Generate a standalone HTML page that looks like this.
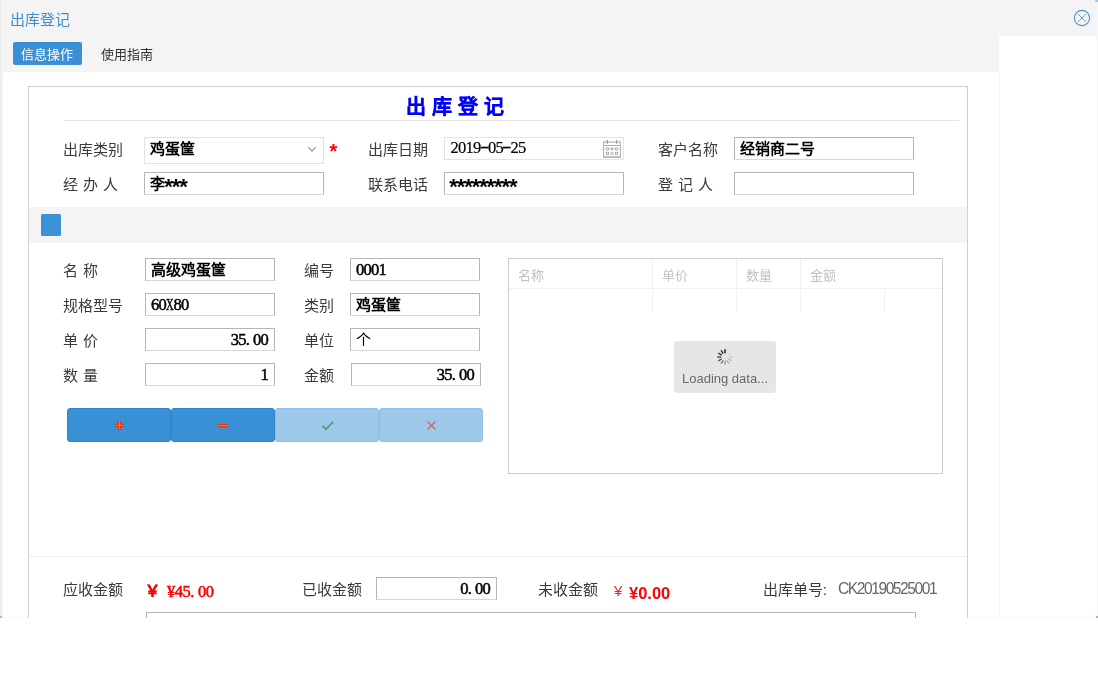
<!DOCTYPE html>
<html lang="zh-CN">
<head>
<meta charset="utf-8">
<title>出库登记</title>
<style>
*{box-sizing:border-box;margin:0;padding:0}
html,body{width:1098px;height:692px;background:#fff;overflow:hidden}
body{font-family:"Liberation Sans",sans-serif;font-size:15px;color:#3a3a3a;position:relative}
#win{position:absolute;left:0;top:0;width:1098px;height:618px;overflow:hidden;background:#fff;will-change:transform}
.abs{position:absolute}
.gray{background:#f4f4f4}
.lbl{position:absolute;margin-left:-1.2px;word-spacing:1px;font-size:15px;line-height:20px;height:20px;white-space:pre;color:#3a3a3a}
.inp{position:absolute;height:23px;border:1px solid #b6b6b6;border-bottom-color:#d6d6d6;background:#fff;font-size:15px;line-height:21px;padding:0 6px 0 5.3px;white-space:pre;color:#000;font-weight:bold;overflow:hidden}
.num{font-family:"Liberation Serif",serif;font-size:16.5px;letter-spacing:-0.75px;font-weight:normal;-webkit-text-stroke:0.5px currentColor}
.num i{font-style:normal;padding-right:4px}
.num u{text-decoration:none;display:inline-block;width:7.5px;text-align:center;transform:scaleX(1.7);letter-spacing:0;position:relative;top:-1px}
.num b{font-weight:normal;display:inline-block;width:7.5px;transform:scaleX(.64);transform-origin:0 50%;letter-spacing:0}
.ast{font-family:"Liberation Sans",sans-serif;font-size:22px;letter-spacing:-1.1px;font-weight:bold;position:relative;top:5px;left:-1px;line-height:0;-webkit-text-stroke:0}
.inp.num{padding-left:5px}
.r{text-align:right}
.btn{position:absolute;top:408px;width:104px;height:34px;border-radius:3px;border:1px solid #2f86cf;background:#3a90d5}
.btn.l{background:#9dc8ea;border-color:#8ec0e8}
.btn svg{position:absolute;left:0;top:0}
.gh{position:absolute;top:267.5px;margin-left:-.6px;font-size:13px;line-height:16px;color:#c2c2c2}
.vl{position:absolute;top:259px;width:1px;height:53px;background:#f1f1f1}
</style>
</head>
<body>
<div id="win">
  <!-- chrome backgrounds -->
  <div class="abs gray" style="left:0;top:0;width:1098px;height:36px"></div>
  <div class="abs gray" style="left:0;top:36px;width:999px;height:36px"></div>
  <div class="abs" style="left:999px;top:72px;width:1px;height:546px;background:#f5f5f5"></div>
  <div class="abs gray" style="left:0;top:0;width:3px;height:618px"></div>
  <div class="abs" style="left:0;top:0;width:1px;height:618px;background:#e9e9e9"></div>

  <div class="abs" style="left:3px;top:617px;width:1094px;height:1px;background:#f7fafd"></div>
  <div class="abs" style="left:0;top:616px;width:2px;height:2px;background:#a9c0dc"></div>
  <div class="abs" style="left:1096px;top:616px;width:2px;height:2px;background:#9bb6d6"></div>
  <div class="abs" style="left:1095px;top:0;width:3px;height:2px;background:#a9c1de;border-bottom-left-radius:3px"></div>
  <div class="abs" style="left:1097px;top:2px;width:1px;height:614px;background:#f7f7f7"></div>
  <!-- window title -->
  <div class="abs" style="left:10px;top:10px;font-size:15px;line-height:20px;color:#3c8dd2">出库登记</div>
  <svg class="abs" style="left:1073px;top:9px" width="18" height="18" viewBox="0 0 18 18">
    <circle cx="9" cy="9" r="7.6" fill="none" stroke="#4b93d3" stroke-width="1.1"/>
    <path d="M5 5 L13 13 M13 5 L5 13" stroke="#5b9bd6" stroke-width=".9" fill="none"/>
  </svg>

  <!-- tabs -->
  <div class="abs" style="left:13px;top:42px;width:69px;height:23px;border-radius:2px;background:#3a8fd5;color:#fff;font-size:13px;line-height:25px;text-align:center;padding-right:1px">信息操作</div>
  <div class="abs" style="left:101px;top:42px;height:23px;font-size:13px;line-height:25px;color:#333">使用指南</div>

  <!-- main panel -->
  <div class="abs" style="left:28px;top:86px;width:940px;height:560px;border:1px solid #cfcfcf;background:#fff"></div>

  <!-- form heading -->
  <div class="abs" style="left:406px;top:94px;font-size:20px;line-height:26px;font-weight:bold;color:#0000f8;white-space:pre;letter-spacing:.3px;-webkit-text-stroke:.3px #0000f8">出 库 登 记</div>
  <div class="abs" style="left:64px;top:120px;width:895px;height:1px;background:#e3e3e3"></div>

  <!-- row 1 -->
  <div class="lbl" style="left:64px;top:140px">出库类别</div>
  <div class="inp" style="left:144px;top:137px;width:180px;height:27px;line-height:22px;border-color:#e2e2e2">鸡蛋筐</div>
  <svg class="abs" style="left:307px;top:146px" width="11" height="8" viewBox="0 0 11 8"><path d="M1.3 1.3 L5 5.2 L8.7 1.3" fill="none" stroke="#9c9c9c" stroke-width="1.25"/></svg>
  <div class="abs" style="left:329.5px;top:141px;font-size:20px;line-height:20px;font-weight:bold;color:#f00">*</div>

  <div class="lbl" style="left:369px;top:140px">出库日期</div>
  <div class="inp num" style="left:444px;top:137px;width:180px;border-color:#e4e4e4;-webkit-text-stroke:.2px #000;line-height:19px;padding-left:5.5px">2019<u>-</u>05<u>-</u>25</div>
  <svg class="abs" style="left:603px;top:140px" width="18" height="18" viewBox="0 0 18 18" fill="none">
    <rect x="0" y="1.2" width="18" height="1.8" fill="#cbcbcb"/>
    <path d="M0.6 1.7 V17.3 M17.4 1.7 V17.3 M0.6 5.5 H17.4" stroke="#adadad" stroke-width="1"/>
    <path d="M4.4 0 V3.8 M13.6 0 V3.8" stroke="#9d9d9d" stroke-width="1.2"/>
    <rect x="0.2" y="16.2" width="17.6" height="1.7" fill="#b2b2b2"/>
    <circle cx="4.4" cy="8.9" r="1.35" stroke="#9c9c9c" stroke-width="1"/><circle cx="9.1" cy="8.9" r="1.7" fill="#bdbdbd"/><circle cx="13.6" cy="8.9" r="1.35" stroke="#9c9c9c" stroke-width="1"/>
    <rect x="3.3" y="12.3" width="2.2" height="2.2" stroke="#a8a8a8" stroke-width=".9"/><ellipse cx="9.1" cy="13.4" rx="1.5" ry="1.1" stroke="#b0b0b0" stroke-width=".9"/><rect x="12.5" y="12.3" width="2.2" height="2.2" stroke="#a8a8a8" stroke-width=".9"/>
  </svg>

  <div class="lbl" style="left:659px;top:140px">客户名称</div>
  <div class="inp" style="left:734px;top:137px;width:180px">经销商二号</div>

  <!-- row 2 -->
  <div class="lbl" style="left:64px;top:175px">经 办 人</div>
  <div class="inp" style="left:144px;top:172px;width:180px">李<span class="ast">***</span></div>
  <div class="lbl" style="left:369px;top:175px">联系电话</div>
  <div class="inp" style="left:444px;top:172px;width:180px"><span class="ast">*********</span></div>
  <div class="lbl" style="left:659px;top:175px">登 记 人</div>
  <div class="inp" style="left:734px;top:172px;width:180px"></div>

  <!-- toolbar band -->
  <div class="abs gray" style="left:29px;top:207px;width:938px;height:36px"></div>
  <div class="abs" style="left:41px;top:214px;width:20px;height:22px;border-radius:1.5px;background:#3b91d5"></div>

  <!-- detail fields -->
  <div class="lbl" style="left:64px;top:261px">名 称</div>
  <div class="inp" style="left:145px;top:258px;width:130px">高级鸡蛋筐</div>
  <div class="lbl" style="left:305px;top:261px">编号</div>
  <div class="inp num" style="left:350px;top:258px;width:130px">0001</div>

  <div class="lbl" style="left:64px;top:296px">规格型号</div>
  <div class="inp num" style="left:145px;top:293px;width:130px">60<b>X</b>80</div>
  <div class="lbl" style="left:305px;top:296px">类别</div>
  <div class="inp" style="left:350px;top:293px;width:130px">鸡蛋筐</div>

  <div class="lbl" style="left:64px;top:331px">单 价</div>
  <div class="inp num r" style="left:145px;top:328px;width:130px">35<i>.</i>00</div>
  <div class="lbl" style="left:305px;top:331px">单位</div>
  <div class="inp" style="left:350px;top:328px;width:130px;font-weight:normal">个</div>

  <div class="lbl" style="left:64px;top:366px">数 量</div>
  <div class="inp num r" style="left:145px;top:363px;width:130px">1</div>
  <div class="lbl" style="left:305px;top:366px">金额</div>
  <div class="inp num r" style="left:351px;top:363px;width:130px">35<i>.</i>00</div>

  <!-- buttons -->
  <div class="btn" style="left:67px"><svg width="102" height="32" viewBox="0 0 102 32"><path d="M47 16.4 H56 M51.5 11.9 V20.9" stroke="#e2350f" stroke-width="3.2"/><path d="M47.6 16.4 H55.4 M51.5 12.5 V20.3" stroke="#f58a16" stroke-width="1"/></svg></div>
  <div class="btn" style="left:171px"><svg width="102" height="32" viewBox="0 0 102 32"><path d="M45.9 16.5 H56.1" stroke="#e2350f" stroke-width="3.5"/><path d="M46.4 16.5 H55.6" stroke="#f58a16" stroke-width="1.1"/></svg></div>
  <div class="btn l" style="left:275px"><svg width="102" height="32" viewBox="0 0 102 32"><path d="M46.5 16.8 L50 20.3 L57 12.8" fill="none" stroke="#4d9c70" stroke-width="1.7"/></svg></div>
  <div class="btn l" style="left:379px"><svg width="102" height="32" viewBox="0 0 102 32"><path d="M47.5 12.5 L55.5 20.5 M55.5 12.5 L47.5 20.5" fill="none" stroke="#c96c72" stroke-width="1.5"/></svg></div>

  <!-- grid -->
  <div class="abs" style="left:508px;top:258px;width:435px;height:216px;border:1px solid #cdcdcd;background:#fff"></div>
  <div class="abs" style="left:509px;top:288px;width:433px;height:1px;background:#f0f0f0"></div>
  <div class="vl" style="left:652px"></div><div class="vl" style="left:736px"></div><div class="vl" style="left:800px"></div><div class="vl" style="left:884px;top:289px;height:23px"></div>
  <div class="gh" style="left:519px">名称</div>
  <div class="gh" style="left:663px">单价</div>
  <div class="gh" style="left:747px">数量</div>
  <div class="gh" style="left:811px">金额</div>

  <!-- loader -->
  <div class="abs" style="left:674px;top:341px;width:102px;height:52px;border-radius:3px;background:#e6e6e6"></div>
  <svg class="abs" style="left:716px;top:348px" width="18" height="18" viewBox="-9 -9 18 18" stroke-width="1.4" stroke-linecap="butt">
    <path d="M0 -3.8 V-7.8" stroke="#111" transform="rotate(0)"/>
    <path d="M0 -3.8 V-7.8" stroke="#222" transform="rotate(-30)"/>
    <path d="M0 -3.8 V-7.8" stroke="#333" transform="rotate(-60)"/>
    <path d="M0 -3.8 V-7.8" stroke="#444" transform="rotate(-90)"/>
    <path d="M0 -3.8 V-7.8" stroke="#555" transform="rotate(-120)"/>
    <path d="M0 -3.8 V-7.8" stroke="#777" transform="rotate(-150)"/>
    <path d="M0 -3.8 V-7.8" stroke="#999" transform="rotate(-180)"/>
    <path d="M0 -3.8 V-7.8" stroke="#aaa" transform="rotate(-210)"/>
    <path d="M0 -3.8 V-7.8" stroke="#bbb" transform="rotate(-240)"/>
    <path d="M0 -3.8 V-7.8" stroke="#ccc" transform="rotate(-270)"/>
    <path d="M0 -3.8 V-7.8" stroke="#d6d6d6" transform="rotate(-300)"/>
    <path d="M0 -3.8 V-7.8" stroke="#dcdcdc" transform="rotate(-330)"/>
  </svg>
  <div class="abs" style="left:674px;top:371px;width:102px;text-align:center;font-size:13px;line-height:16px;color:#6a6a6a">Loading data...</div>

  <!-- footer -->
  <div class="abs" style="left:29px;top:556px;width:938px;height:1px;background:#efefef"></div>
  <div class="lbl" style="left:64px;top:580px">应收金额</div>
  <div class="abs" style="left:145px;top:581px;font-size:15px;line-height:20px;font-weight:bold;color:#f00;-webkit-text-stroke:.4px #f00">￥</div>
  <div class="abs num" style="left:167px;top:582px;line-height:20px;letter-spacing:-.5px;-webkit-text-stroke:.55px #f00;color:#f00;white-space:pre">¥45<i>.</i>00</div>
  <div class="lbl" style="left:303px;top:580px">已收金额</div>
  <div class="inp num r" style="left:376px;top:577px;width:121px;padding-right:6px">0<i>.</i>00</div>
  <div class="lbl" style="left:539px;top:580px">未收金额</div>
  <div class="abs" style="left:614px;top:581px;font-size:15px;line-height:20px;color:#f22">¥</div>
  <div class="abs" style="left:629px;top:583px;font-size:16.5px;line-height:20px;font-weight:bold;color:#f00">¥0.00</div>
  <div class="lbl" style="left:764px;top:580px">出库单号:</div>
  <div class="abs" style="left:838px;top:579px;font-size:15.6px;line-height:20px;color:#666;letter-spacing:-1.45px">CK20190525001</div>
  <div class="abs" style="left:146px;top:612px;width:770px;height:40px;border:1px solid #b4b4b4;background:#fff"></div>
</div>
</body>
</html>
